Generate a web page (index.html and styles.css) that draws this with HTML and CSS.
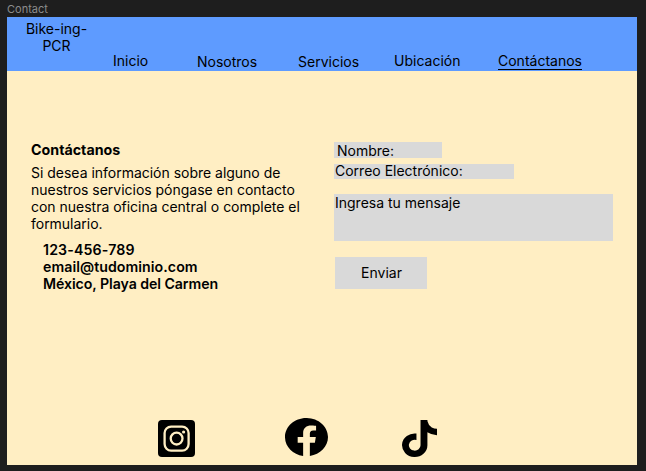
FILE: index.html
```html
<!DOCTYPE html>
<html lang="es">
<head>
<meta charset="utf-8">
<title>Contact</title>
<link rel="stylesheet" href="styles.css">
</head>
<body>
<div class="frame-label">Contact</div>
<div class="frame">
  <header class="header">
    <div class="brand">Bike-ing-<br>PCR</div>
    <nav class="nav">
      <a class="inicio">Inicio</a>
      <a class="nosotros">Nosotros</a>
      <a class="servicios">Servicios</a>
      <a class="ubicacion">Ubicación</a>
      <a class="active">Contáctanos</a>
    </nav>
  </header>
  <main class="main">
    <section class="info">
      <h1>Contáctanos</h1>
      <p>Si desea información sobre alguno de<br>nuestros servicios póngase en contacto<br>con nuestra oficina central o complete el<br>formulario.</p>
      <address><span class="phone">123-456-789</span><br><span class="mail">email@tudominio.com</span><br><span class="place">México, Playa del Carmen</span></address>
    </section>
    <form class="form">
      <div class="field name">Nombre:</div>
      <div class="field email">Correo Electrónico:</div>
      <div class="field message">Ingresa tu mensaje</div>
      <button class="send" type="button">Enviar</button>
    </form>
  </main>
  <footer class="social">
    <svg class="instagram" viewBox="0 0 37 37">
      <rect width="37" height="37" rx="4"/>
      <g fill="none" stroke="#ffeec3">
        <rect x="6.6" y="6.6" width="24" height="24" rx="6.5" stroke-width="2.3"/>
        <circle cx="18.6" cy="18.6" r="5.9" stroke-width="2.3"/>
      </g>
      <circle cx="25.6" cy="12" r="1.6" fill="#ffeec3"/>
    </svg>
    <svg class="facebook" viewBox="0 0 16 16" preserveAspectRatio="none">
      <path d="M16 8.049c0-4.446-3.582-8.05-8-8.05C3.58 0-.002 3.603-.002 8.05c0 4.017 2.926 7.347 6.75 7.951v-5.625h-2.03V8.05H6.75V6.275c0-2.017 1.195-3.131 3.022-3.131.876 0 1.791.157 1.791.157v1.98h-1.009c-.993 0-1.303.621-1.303 1.258v1.51h2.218l-.354 2.326H9.25V16c3.824-.604 6.75-3.934 6.75-7.951"/>
    </svg>
    <svg class="tiktok" viewBox="0 0 448 512" preserveAspectRatio="none">
      <path d="M448 209.91a210.06 210.06 0 0 1-122.77-39.25v178.72A162.55 162.55 0 1 1 185 188.31v89.89a74.62 74.62 0 1 0 52.23 71.18V0h88a121.18 121.18 0 0 0 1.86 22.17A122.18 122.18 0 0 0 381 102.39a121.43 121.43 0 0 0 67 20.14z"/>
    </svg>
  </footer>
</div>
</body>
</html>
```

FILE: styles.css
```css
* { box-sizing: border-box; }
body {
  margin: 0;
  height: 471px;
  padding: 0 9px 6px 7px;
  background: #1e1e1e;
  color: #000;
  font: 14px/17px Inter, sans-serif;
  overflow: hidden;
}
.frame-label {
  height: 17px;
  padding-top: 1px;
  color: #8c8c8c;
  font-size: 11px;
  line-height: 16px;
}
.frame {
  display: flex;
  flex-direction: column;
  height: 448px;
  background: #ffeec3;
}
.header {
  display: flex;
  height: 54px;
  background: #5e9bff;
}
.brand {
  width: 99px;
  padding-top: 3px;
  text-align: center;
}
.nav {
  display: grid;
  grid-template-columns: 84px 101px 96px 104px auto;
  padding: 35px 0 0 7px;
  align-items: start;
}
.nav .nosotros, .nav .servicios { padding-top: 1px; }
.nav .active {
  height: 18px;
  border-bottom: 1px solid #000;
}
.main {
  display: grid;
  grid-template-columns: 303px 1fr;
  height: 331px;
  padding: 70px 24px 0;
}
h1 {
  margin: 0 0 6px;
  font-size: 14.25px;
  line-height: 17px;
  font-weight: 700;
}
p {
  margin: 0;
  letter-spacing: -0.015px;
  white-space: nowrap;
}
address {
  margin: 9px 0 0 12px;
  font-style: normal;
  font-weight: 600;
  font-size: 14.15px;
}
.phone { letter-spacing: 0.15px; }
.mail { letter-spacing: 0.07px; }
.place { letter-spacing: -0.06px; }
.form {
  display: flex;
  flex-direction: column;
  align-items: flex-start;
  padding-top: 1px;
}
.field { background: #d9d9d9; padding-left: 1px; }
.name { width: 108px; height: 16px; padding-left: 3px; }
.email { width: 180px; height: 15px; margin-top: 6px; line-height: 14px; }
.message { width: 279px; height: 47px; margin-top: 15px; }
.send {
  width: 92px;
  height: 32px;
  margin: 16px 0 0 1px;
  padding: 0 0 1px 1px;
  border: 0;
  background: #d9d9d9;
  color: #000;
  font: inherit;
}
.social {
  display: flex;
  align-items: flex-start;
  padding: 16px 0 0 151px;
}
.instagram { width: 37px; height: 37px; margin-top: 2px; }
.facebook { width: 43px; height: 38px; margin-left: 90px; }
.tiktok { width: 35px; height: 37px; margin: 2px 0 0 74px; }
```
